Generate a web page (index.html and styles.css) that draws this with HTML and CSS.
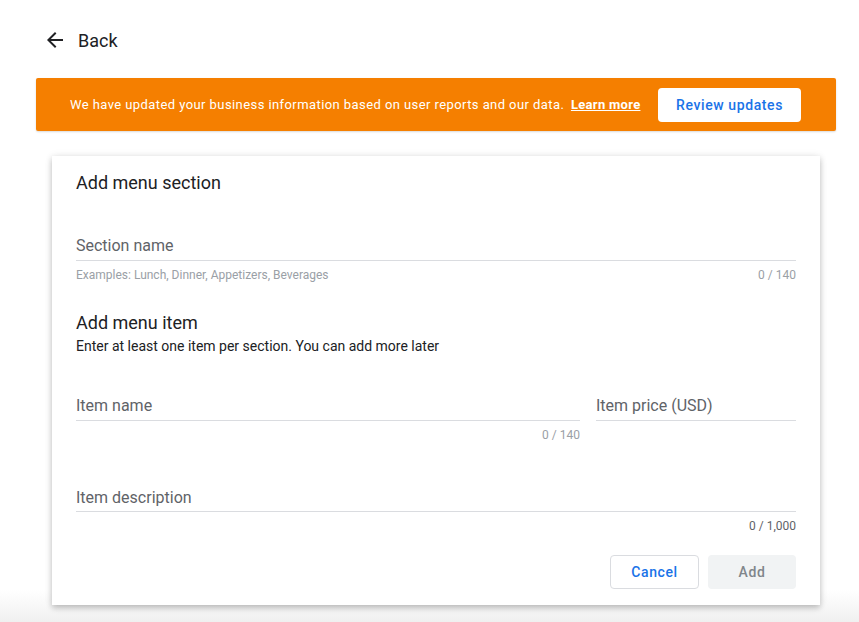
FILE: index.html
```html
<!DOCTYPE html>
<html lang="en">
<head>
    <meta charset="UTF-8">
    <meta name="viewport" content="width=device-width, initial-scale=1.0">
    <title>Add menu section</title>
    <link rel="stylesheet" href="styles.css">
</head>
<body>

    <div class="top-bar">
        <svg class="back-icon" width="24" height="24" viewBox="0 0 24 24">
            <path d="M20 11H7.83l5.59-5.59L12 4l-8 8 8 8 1.41-1.41L7.83 13H20v-2z" fill="#202124"/>
        </svg>
        <span class="back-text">Back</span>
    </div>

    <!-- Banner -->
    <div class="banner">
        <span class="banner-text">We have updated your business information based on user reports and our data. <a href="#" class="learn-more">Learn more</a></span>
        <button class="review-button">Review updates</button>
    </div>

    <!-- Card -->
    <div class="card">
        <h2 class="card-title">Add menu section</h2>

        <div class="field field-section">
            <span class="placeholder">Section name</span>
        </div>
        <div class="helper-row">
            <span class="helper">Examples: Lunch, Dinner, Appetizers, Beverages</span>
            <span class="counter">0 / 140</span>
        </div>

        <h2 class="card-title item-title">Add menu item</h2>
        <div class="subtitle">Enter at least one item per section. You can add more later</div>

        <div class="item-row">
            <div>
                <div class="field">
                    <span class="placeholder">Item name</span>
                </div>
                <div class="helper-row">
                    <span></span>
                    <span class="counter">0 / 140</span>
                </div>
            </div>
            <div>
                <div class="field">
                    <span class="placeholder">Item price (USD)</span>
                </div>
            </div>
        </div>

        <div class="field field-desc">
            <span class="placeholder">Item description</span>
        </div>
        <div class="helper-row">
            <span></span>
            <span class="counter counter-dark">0 / 1,000</span>
        </div>

        <div class="actions">
            <button class="cancel-button">Cancel</button>
            <button class="add-button" disabled>Add</button>
        </div>
    </div>

</body>
</html>
```

FILE: styles.css
```css
body {
    font-family: Roboto, Arial, sans-serif;
    margin: 0;
    height: 622px;
    background: linear-gradient(to bottom, #fff 0, #fff 590px, #f0f0f0 622px);
    color: #202124;
    overflow: hidden;
}
.top-bar {
    display: flex;
    align-items: center;
    height: 24px;
    padding: 28px 0 0 43px;
}
.back-text {
    font-size: 18px;
    margin-left: 11px;
    color: #202124;
}
.banner {
    display: flex;
    justify-content: space-between;
    align-items: center;
    box-sizing: border-box;
    width: 800px;
    height: 53px;
    margin: 26px 0 0 36px;
    padding: 0 35px 0 34px;
    background-color: #f57f00;
    border-radius: 2px;
    box-shadow: 0 1px 2px rgba(0, 0, 0, 0.15);
}
.banner-text {
    color: #fff;
    font-size: 13px;
    letter-spacing: 0.42px;
}
.learn-more {
    color: #fff;
    font-weight: 700;
    margin-left: 3px;
    letter-spacing: 0.3px;
}
.review-button {
    font-family: Roboto, Arial, sans-serif;
    height: 34px;
    width: 143px;
    background-color: #fff;
    color: #1a73e8;
    border: none;
    border-radius: 4px;
    font-size: 14px;
    font-weight: 500;
    letter-spacing: 0.6px;
    cursor: pointer;
}
.card {
    box-sizing: border-box;
    width: 768px;
    margin: 25px 0 0 52px;
    padding: 15px 24px 16px;
    background-color: #fff;
    box-shadow: 0 3px 6px rgba(0, 0, 0, 0.22), 0 0 8px rgba(0, 0, 0, 0.08);
}
.card-title {
    margin: 0;
    font-size: 18px;
    font-weight: 400;
    line-height: 24px;
    color: #202124;
}
.field {
    border-bottom: 1px solid #dadce0;
    padding-bottom: 4px;
    line-height: 20px;
}
.field-section {
    margin-top: 41px;
}
.placeholder {
    font-size: 16px;
    color: #5f6368;
}
.helper-row {
    display: flex;
    justify-content: space-between;
    margin-top: 7px;
    font-size: 12px;
    line-height: 15px;
}
.helper {
    color: #9aa0a6;
}
.counter {
    color: #9aa0a6;
}
.counter-dark {
    color: #5f6368;
}
.item-title {
    margin-top: 28px;
}
.subtitle {
    margin-top: 2px;
    font-size: 14px;
    line-height: 18px;
    color: #202124;
}
.item-row {
    display: grid;
    grid-template-columns: 1fr 200px;
    gap: 16px;
    margin-top: 41px;
}
.field-desc {
    margin-top: 45px;
    padding-bottom: 3px;
}
.actions {
    display: flex;
    justify-content: flex-end;
    gap: 9px;
    margin-top: 21px;
}
.cancel-button,
.add-button {
    font-family: Roboto, Arial, sans-serif;
    width: 89px;
    height: 34px;
    border-radius: 4px;
    font-size: 14px;
    font-weight: 500;
    letter-spacing: 0.6px;
}
.cancel-button {
    background-color: #fff;
    color: #1a73e8;
    border: 1px solid #dadce0;
    cursor: pointer;
}
.add-button {
    width: 88px;
    background-color: #f1f3f4;
    color: #80868b;
    border: none;
}
```
